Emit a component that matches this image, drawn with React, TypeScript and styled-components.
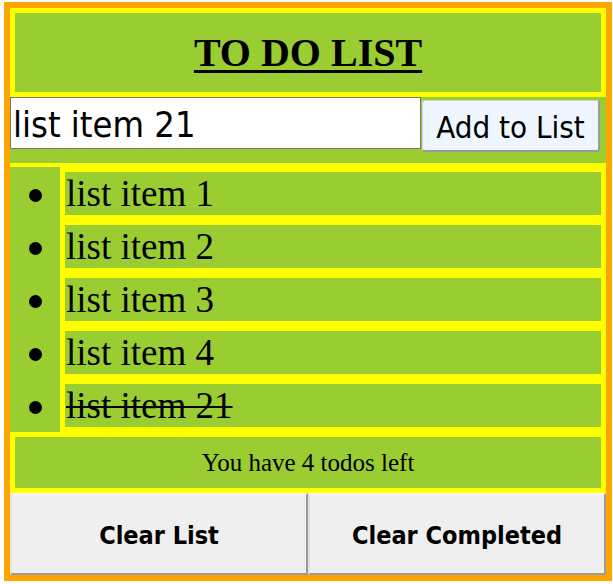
import React from "react";
import styled, { createGlobalStyle } from "styled-components";

const Global = createGlobalStyle`
  html, body { margin: 0; padding: 0; background: #ffffff; }
  body { padding: 2px 1px 3px 4px; }
`;

const sans = `Tahoma, "DejaVu Sans Condensed", "DejaVu Sans", sans-serif`;
const serif = `"Liberation Serif", "Times New Roman", serif`;

const Frame = styled.div`
  box-sizing: border-box;
  width: 608px;
  height: 579px;
  border: 6px solid #ffa500;
  background: #9acd32;
  display: flex;
  flex-direction: column;
`;

const Header = styled.header`
  box-sizing: border-box;
  height: 89px;
  border: 5px solid #ffff00;
  display: flex;
  align-items: center;
  justify-content: center;
`;

const Title = styled.h1`
  margin: 0;
  font-family: ${serif};
  font-weight: bold;
  font-size: 40px;
  text-decoration: underline;
  text-decoration-thickness: 3px;
  text-underline-offset: 4px;
  color: #000;
`;

const Form = styled.form`
  height: 66px;
  display: flex;
  align-items: flex-start;
  gap: 1px;
`;

const TextInput = styled.input`
  box-sizing: border-box;
  width: 411px;
  height: 52px;
  margin: 0;
  padding: 3px 2px 0;
  border: 1px solid #767676;
  background: #fff;
  font-family: ${sans};
  font-size: 36px;
  color: #000;
  outline: none;
`;

const AddButton = styled.button`
  box-sizing: border-box;
  width: 178px;
  height: 52px;
  margin: 3px 0 0 0;
  padding: 2px 0 0;
  border: 1px solid #c8d0dc;
  border-right: 2px solid #9a9a9a;
  border-bottom: 2px solid #9a9a9a;
  border-radius: 3px;
  background: #eef6ff;
  font-family: ${sans};
  font-size: 31px;
  color: #000;
`;

const List = styled.ul`
  margin: 0;
  padding: 0;
  list-style: none;
  border-top: 4px solid #ffff00;
`;

const Row = styled.li`
  display: flex;
  height: 53px;
`;

const Bullet = styled.span`
  width: 50px;
  display: flex;
  align-items: center;
  justify-content: center;
  &::before {
    content: "";
    width: 13px;
    height: 13px;
    border-radius: 50%;
    background: #000;
    margin-top: 4px;
  }
`;

const Item = styled.span<{ $done?: boolean }>`
  box-sizing: border-box;
  flex: 1;
  border: 5px solid #ffff00;
  padding-left: 1px;
  font-family: ${serif};
  font-size: 37px;
  line-height: 43px;
  color: #000;
  text-decoration: ${(p) => (p.$done ? "line-through" : "none")};
  text-decoration-thickness: 2px;
`;

const Status = styled.div`
  box-sizing: border-box;
  height: 61px;
  border: 5px solid #ffff00;
  display: flex;
  align-items: center;
  justify-content: center;
  font-family: ${serif};
  font-size: 25px;
  color: #000;
`;

const Actions = styled.div`
  flex: 1;
  display: flex;
`;

const ActionButton = styled.button`
  box-sizing: border-box;
  flex: 1;
  margin: 0;
  padding: 3px 0 0;
  background: #efefef;
  border: 2px solid;
  border-color: #f4f4f4 #9a9a9a #9a9a9a #e2e2e2;
  font-family: ${sans};
  font-weight: bold;
  font-size: 25px;
  color: #000;
`;

const items = [
  { text: "list item 1", done: false },
  { text: "list item 2", done: false },
  { text: "list item 3", done: false },
  { text: "list item 4", done: false },
  { text: "list item 21", done: true },
];

export default function App() {
  return (
    <>
      <Global />
      <Frame>
        <Header>
          <Title>TO DO LIST</Title>
        </Header>
        <Form onSubmit={(e) => e.preventDefault()}>
          <TextInput defaultValue="list item 21" />
          <AddButton type="submit">Add to List</AddButton>
        </Form>
        <List>
          {items.map((it) => (
            <Row key={it.text}>
              <Bullet />
              <Item $done={it.done}>{it.text}</Item>
            </Row>
          ))}
        </List>
        <Status>You have 4 todos left</Status>
        <Actions>
          <ActionButton type="button">Clear List</ActionButton>
          <ActionButton type="button">Clear Completed</ActionButton>
        </Actions>
      </Frame>
    </>
  );
}
